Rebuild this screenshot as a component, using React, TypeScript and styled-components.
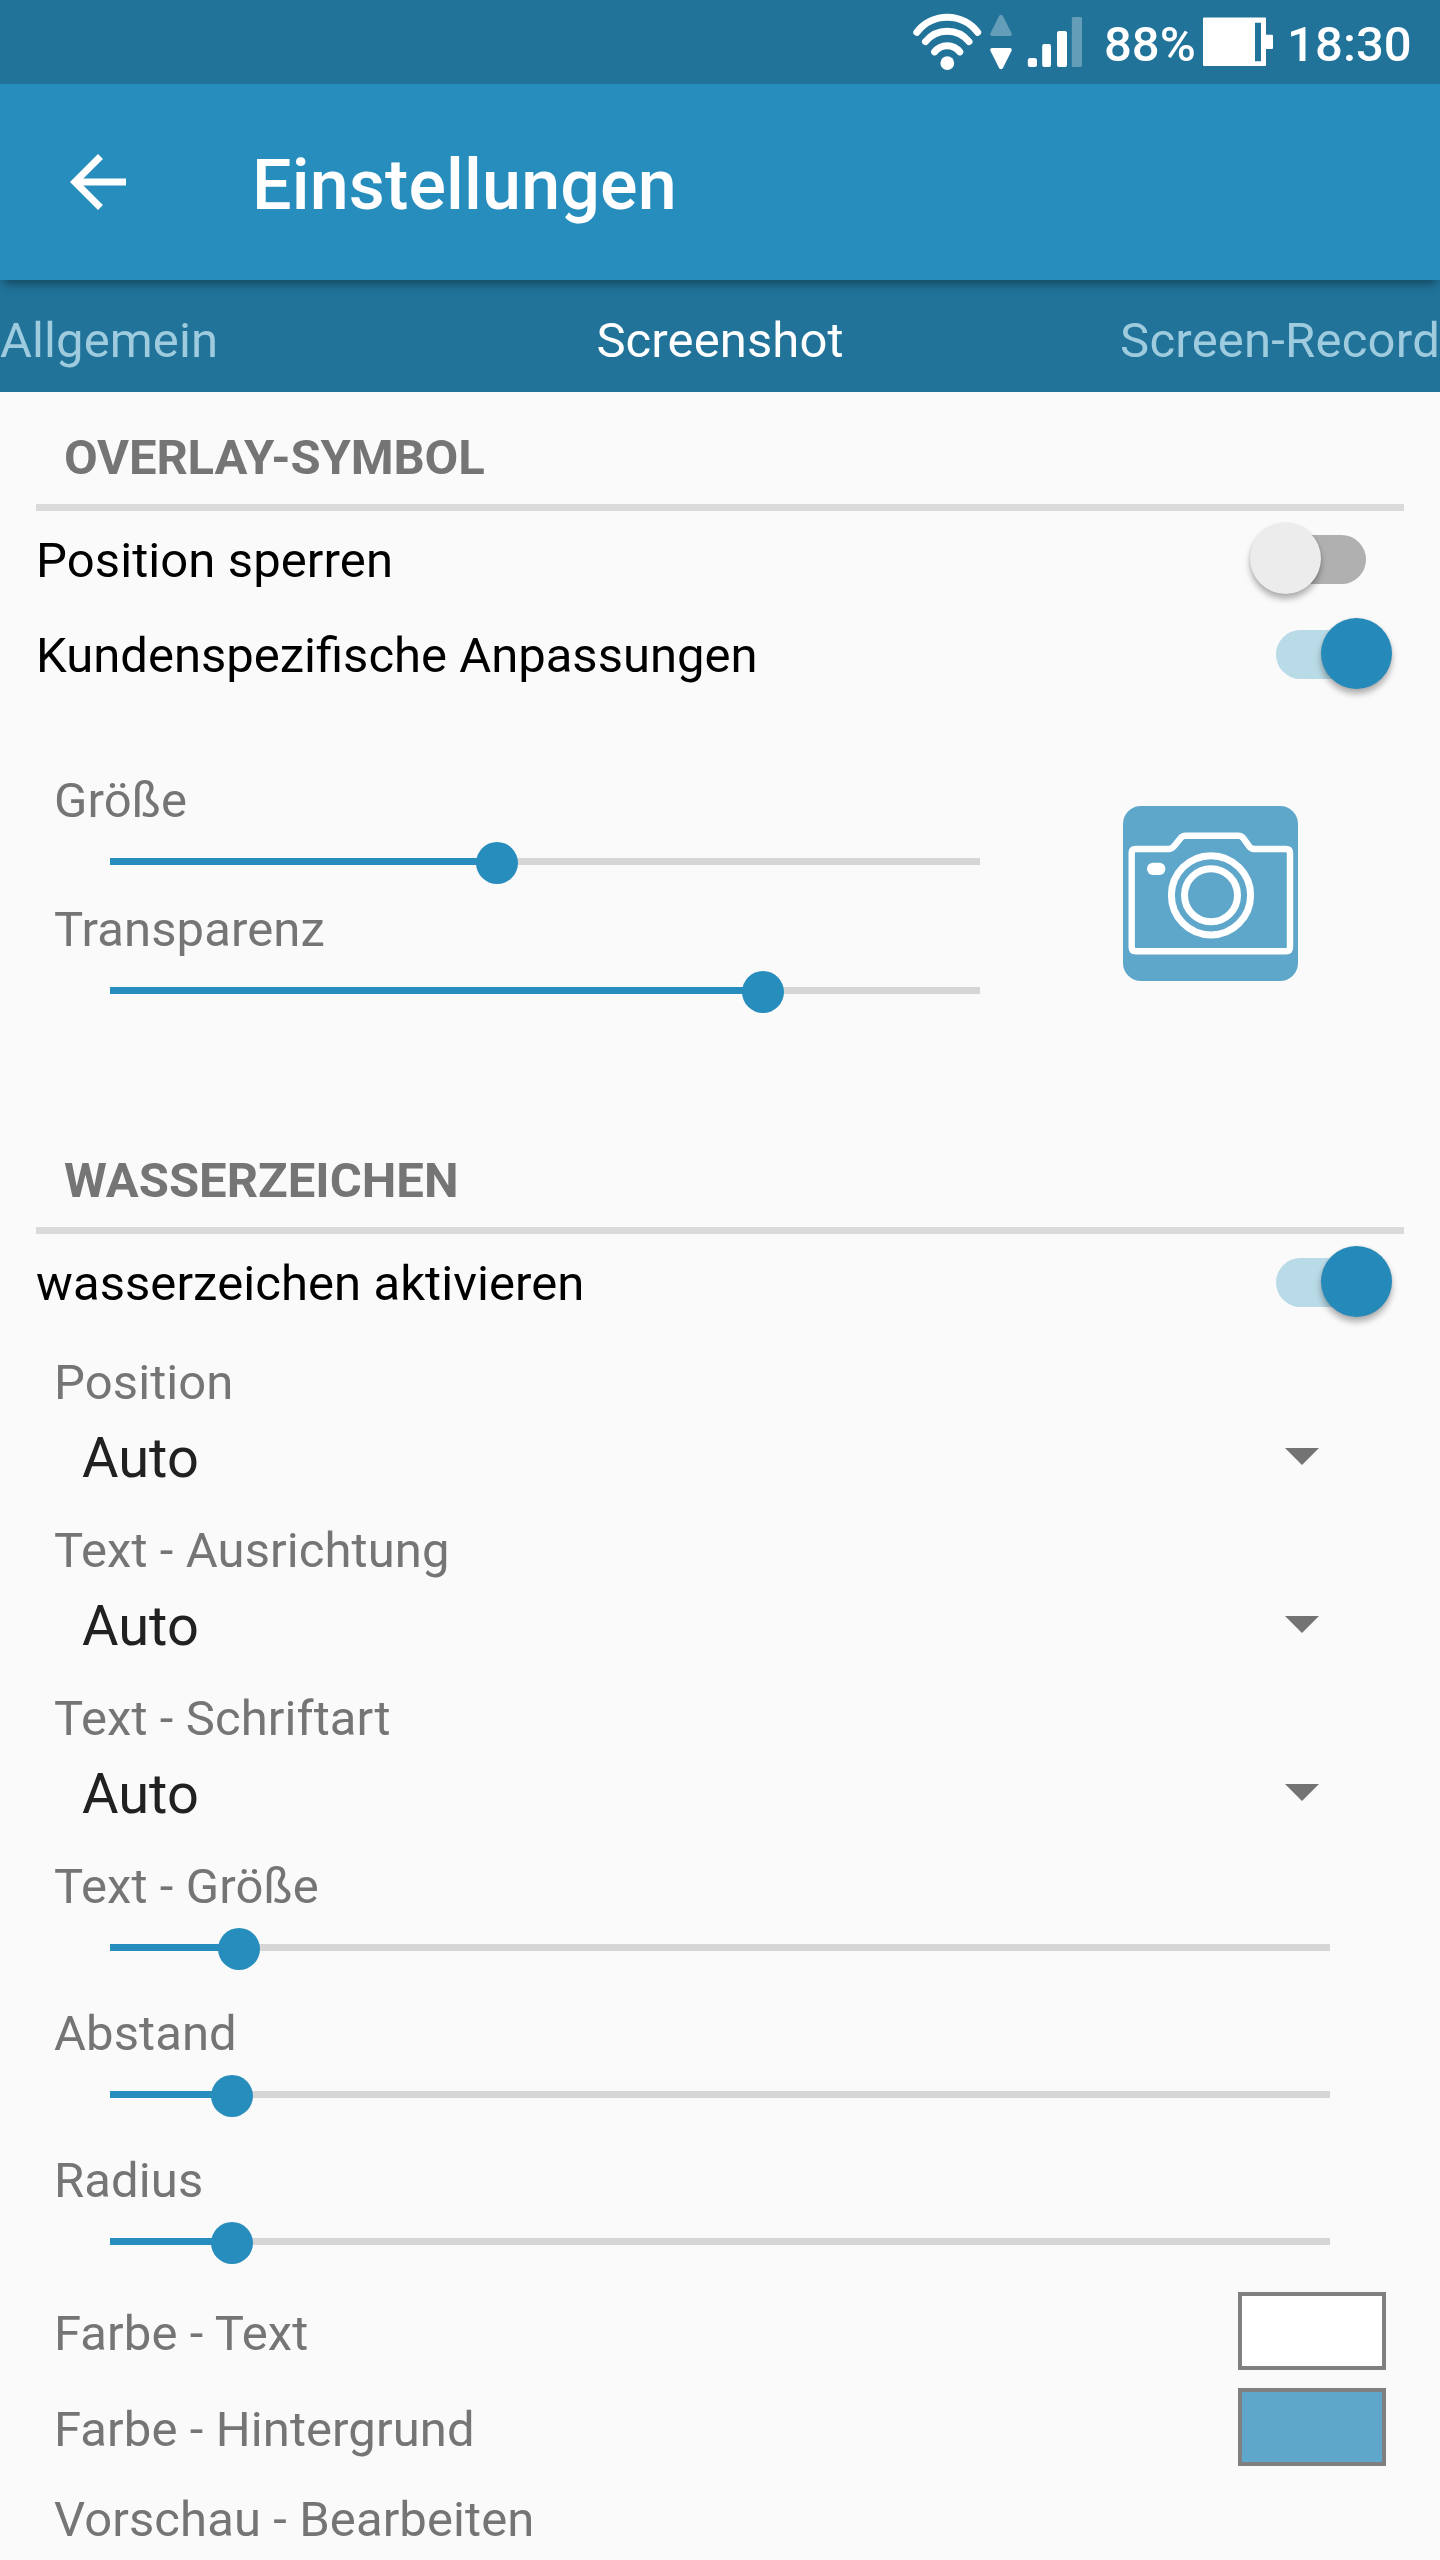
import React from "react";
import styled, { createGlobalStyle } from "styled-components";

const color = {
  primary: "#278dbd",
  primaryDark: "#217399",
  background: "#fafafa",
  label: "#757575",
  divider: "#dadada",
  track: "#d6d6d6",
  overlay: "#5ea7cb",
};

const GlobalStyle = createGlobalStyle`
  * { box-sizing: border-box; }
  html, body { margin: 0; padding: 0; background: ${color.background}; }
  svg { display: block; flex: none; }
`;

const Screen = styled.div`
  width: 1440px;
  height: 2560px;
  overflow: hidden;
  display: flex;
  flex-direction: column;
  background: ${color.background};
  font-family: Roboto, "Noto Sans", sans-serif;
  font-size: 49px;
  line-height: 57px;
  white-space: nowrap;
`;

const StatusBar = styled.header`
  display: flex;
  height: 84px;
  flex: none;
  padding-left: 900px;
  background: ${color.primaryDark};
  color: #fff;
  font-weight: 500;
`;

const BatteryLevel = styled.span`
  width: 99px;
  margin-left: 4px;
  padding-top: 16px;
`;

const Clock = styled.span`
  margin-left: 13px;
  padding-top: 16px;
  letter-spacing: 0.1px;
`;

const AppBar = styled.div`
  position: relative;
  z-index: 1;
  display: flex;
  align-items: flex-start;
  height: 196px;
  flex: none;
  padding: 56px 56px 0;
  background: ${color.primary};
  box-shadow: 0 8px 9px -4px rgba(0, 0, 0, 0.38);
`;

const Title = styled.h1`
  margin: 4px 0 0 112px;
  color: #fff;
  font-size: 70px;
  line-height: 82px;
  font-weight: 500;
  letter-spacing: 0.15px;
`;

const Tabs = styled.nav`
  display: grid;
  grid-template-columns: 1fr auto 1fr;
  height: 112px;
  flex: none;
  padding-top: 32px;
  background: ${color.primaryDark};
`;

const Tab = styled.span<{ $active?: boolean; $align?: string }>`
  color: ${(p) => (p.$active ? "#fff" : "#9fcbdf")};
  text-align: ${(p) => p.$align ?? "left"};
  letter-spacing: ${(p) => (p.$align === "right" ? 0.22 : 0.1)}px;
`;

const Section = styled.section<{ $height?: number }>`
  display: flex;
  flex-direction: column;
  flex: none;
  height: ${(p) => (p.$height ? `${p.$height}px` : "auto")};
`;

const SectionTitle = styled.h2<{ $tracking?: number }>`
  height: 119px;
  margin: 0 36px;
  padding: 37px 28px 0;
  border-bottom: 7px solid ${color.divider};
  color: ${color.label};
  font-size: 49px;
  line-height: 57px;
  font-weight: 700;
  letter-spacing: ${(p) => p.$tracking ?? 0}px;
`;

const SwitchRow = styled.div`
  display: flex;
  justify-content: space-between;
  height: 95px;
  padding: 21px 74px 0 36px;
  color: #000;
`;

const SwitchLabel = styled.span<{ $tracking?: number }>`
  letter-spacing: ${(p) => p.$tracking ?? 0}px;
`;

const SwitchTrack = styled.span<{ $on?: boolean }>`
  position: relative;
  width: 90px;
  height: 49px;
  margin-top: 3px;
  border-radius: 25px;
  background: ${(p) => (p.$on ? "#b9dae7" : "#b0b0b0")};
`;

const SwitchThumb = styled.span<{ $on?: boolean }>`
  position: absolute;
  top: -12px;
  left: ${(p) => (p.$on ? 45 : -26)}px;
  width: 71px;
  height: 71px;
  border-radius: 50%;
  background: ${(p) => (p.$on ? "#258aba" : "#ececec")};
  box-shadow: 0 5px 6px rgba(0, 0, 0, 0.3), 0 0 3px rgba(0, 0, 0, 0.08);
`;

const OverlayPanel = styled.div`
  display: flex;
  justify-content: space-between;
  padding: 71px 142px 0 54px;
`;

const SliderList = styled.div<{ $gap: number }>`
  display: flex;
  flex-direction: column;
  gap: ${(p) => p.$gap}px;
`;

const SliderBlock = styled.div`
  display: flex;
  flex-direction: column;
`;

const Label = styled.span`
  color: ${color.label};
  letter-spacing: 0.1px;
`;

const SliderTrack = styled.div<{ $width: number }>`
  position: relative;
  width: ${(p) => p.$width}px;
  height: 7px;
  margin: 29px 0 0 56px;
  background: ${color.track};
`;

const SliderFill = styled.div`
  height: 7px;
  background: ${color.primary};
`;

const SliderThumb = styled.span`
  position: absolute;
  top: -16.5px;
  width: 42px;
  height: 42px;
  margin-left: -21px;
  border-radius: 50%;
  background: ${color.primary};
`;

const OverlayButton = styled.div`
  width: 175px;
  height: 175px;
  margin-top: 34px;
  border-radius: 18px;
  background: ${color.overlay};
`;

const Fields = styled.div`
  display: flex;
  flex-direction: column;
  padding: 25px 54px 0 54px;
`;

const SelectField = styled.div`
  display: flex;
  flex-direction: column;
  height: 168px;
`;

const SelectValue = styled.div`
  display: flex;
  justify-content: space-between;
  margin-top: 14px;
  padding: 0 67px 0 28px;
  color: #212121;
  font-size: 56px;
  line-height: 66px;
`;

const Caret = styled.i`
  width: 34px;
  height: 17px;
  margin-top: 23px;
  background: #737373;
  clip-path: polygon(0 0, 100% 0, 50% 100%);
`;

const ColorList = styled.div`
  display: flex;
  flex-direction: column;
  margin-top: 47px;
`;

const ColorRow = styled.div`
  display: flex;
  justify-content: space-between;
  height: 96px;
`;

const ColorLabel = styled(Label)`
  padding-top: 13px;
`;

const Swatch = styled.span<{ $fill: string }>`
  width: 148px;
  height: 78px;
  border: 4px solid #808080;
  background: ${(p) => p.$fill};
`;

const PreviewLabel = styled(Label)`
  padding-top: 7px;
`;

const SignalIcons = () => (
  <svg width="200" height="84" viewBox="900 0 200 84" fill="#fff">
    <g fill="none" stroke="#fff" strokeWidth="7" strokeLinecap="round">
      <path d="M916.8 32.3A38.3 38.3 0 0 1 977.7 32.3" />
      <path d="M925.5 41.6A28 28 0 0 1 969 41.6" />
      <path d="M934.6 51.9A15.8 15.8 0 0 1 959.8 51.9" />
    </g>
    <circle cx="947.3" cy="63.1" r="6.9" />
    <path
      opacity=".3"
      d="M999.2 15.800Q1001 13.800 1002.800 15.800L1011.600 33.300Q1012.400 36 1009.600 36H992.400Q989.600 36 990.400 33.300Z"
    />
    <path d="M999.2 68.200Q1001 70.200 1002.800 68.200L1011.600 50.700Q1012.400 48 1009.600 48H992.400Q989.600 48 990.400 50.700Z" />
    <rect x="1027.8" y="58" width="9.2" height="9" rx="2.5" />
    <rect x="1042.2" y="44" width="8.8" height="23" rx="2" />
    <rect x="1057" y="31" width="10" height="36" rx="2" />
    <rect x="1071.8" y="17" width="10.2" height="50" rx="1.5" opacity=".3" />
  </svg>
);

const BatteryIcon = () => (
  <svg width="71" height="84" viewBox="1203 0 71 84" fill="#fff">
    <path
      fillRule="evenodd"
      d="M1204 17.6h61a1 1 0 0 1 1 1V34.7h6a1 1 0 0 1 1 1V48a1 1 0 0 1-1 1h-6V65a1 1 0 0 1-1 1h-61a1 1 0 0 1-1-1V18.6a1 1 0 0 1 1-1zM1255 22.7V61.3h6V22.7z"
    />
  </svg>
);

const BackIcon = () => (
  <svg width="84" height="84" viewBox="0 0 24 24" fill="#fff">
    <path d="M20 11H7.83l5.59-5.59L12 4l-8 8 8 8 1.41-1.41L7.83 13H20v-2z" />
  </svg>
);

const CameraIcon = () => (
  <svg width="175" height="175" viewBox="0 0 175 175" fill="none" stroke="#fff" strokeWidth="6.4">
    <path
      strokeLinejoin="round"
      d="M12.7 43H46c2.200 0 3.600-.9 5-2.800l6.500-8c1.400-1.700 2.600-2.500 4.700-2.500h53.300c2.200 0 3.500.8 4.800 2.500l5.700 8c1.300 1.900 2.600 2.800 4.800 2.800H163c2.700 0 4 1.300 4 4v94.300c0 2.700-1.300 4-4 4H12.700c-2.700 0-4-1.300-4-4V47c0-2.700 1.300-4 4-4z"
    />
    <circle cx="88" cy="89.300" r="39.600" strokeWidth="7" />
    <circle cx="88" cy="89.300" r="26.500" strokeWidth="7" />
    <rect x="24" y="56.700" width="18.400" height="12.300" rx="6" fill="#fff" stroke="none" />
  </svg>
);

const Switch = ({ label, on, tracking }: { label: string; on?: boolean; tracking?: number }) => (
  <SwitchRow>
    <SwitchLabel $tracking={tracking}>{label}</SwitchLabel>
    <SwitchTrack $on={on}>
      <SwitchThumb $on={on} />
    </SwitchTrack>
  </SwitchRow>
);

const Slider = ({ label, width, value }: { label: string; width: number; value: number }) => (
  <SliderBlock>
    <Label>{label}</Label>
    <SliderTrack $width={width}>
      <SliderFill style={{ width: `${value}%` }} />
      <SliderThumb style={{ left: `${value}%` }} />
    </SliderTrack>
  </SliderBlock>
);

const Select = ({ label, value }: { label: string; value: string }) => (
  <SelectField>
    <Label>{label}</Label>
    <SelectValue>
      {value}
      <Caret />
    </SelectValue>
  </SelectField>
);

export default function App() {
  return (
    <>
      <GlobalStyle />
      <Screen>
        <StatusBar>
          <SignalIcons />
          <BatteryLevel>88%</BatteryLevel>
          <BatteryIcon />
          <Clock>18:30</Clock>
        </StatusBar>
        <AppBar>
          <BackIcon />
          <Title>Einstellungen</Title>
        </AppBar>
        <Tabs>
          <Tab>Allgemein</Tab>
          <Tab $active>Screenshot</Tab>
          <Tab $align="right">Screen-Record</Tab>
        </Tabs>

        <Section $height={723}>
          <SectionTitle $tracking={-0.15}>OVERLAY-SYMBOL</SectionTitle>
          <Switch label="Position sperren" tracking={0.1} />
          <Switch label="Kundenspezifische Anpassungen" on />
          <OverlayPanel>
            <SliderList $gap={36}>
              <Slider label="Größe" width={870} value={44.45} />
              <Slider label="Transparenz" width={870} value={75} />
            </SliderList>
            <OverlayButton>
              <CameraIcon />
            </OverlayButton>
          </OverlayPanel>
        </Section>

        <Section>
          <SectionTitle>WASSERZEICHEN</SectionTitle>
          <Switch label="wasserzeichen aktivieren" on tracking={0.08} />
          <Fields>
            <Select label="Position" value="Auto" />
            <Select label="Text - Ausrichtung" value="Auto" />
            <Select label="Text - Schriftart" value="Auto" />
            <SliderList $gap={54}>
              <Slider label="Text - Größe" width={1220} value={10.56} />
              <Slider label="Abstand" width={1220} value={10.04} />
              <Slider label="Radius" width={1220} value={10.04} />
            </SliderList>
            <ColorList>
              <ColorRow>
                <ColorLabel>Farbe - Text</ColorLabel>
                <Swatch $fill="#ffffff" />
              </ColorRow>
              <ColorRow>
                <ColorLabel>Farbe - Hintergrund</ColorLabel>
                <Swatch $fill={color.overlay} />
              </ColorRow>
              <PreviewLabel>Vorschau - Bearbeiten</PreviewLabel>
            </ColorList>
          </Fields>
        </Section>
      </Screen>
    </>
  );
}
